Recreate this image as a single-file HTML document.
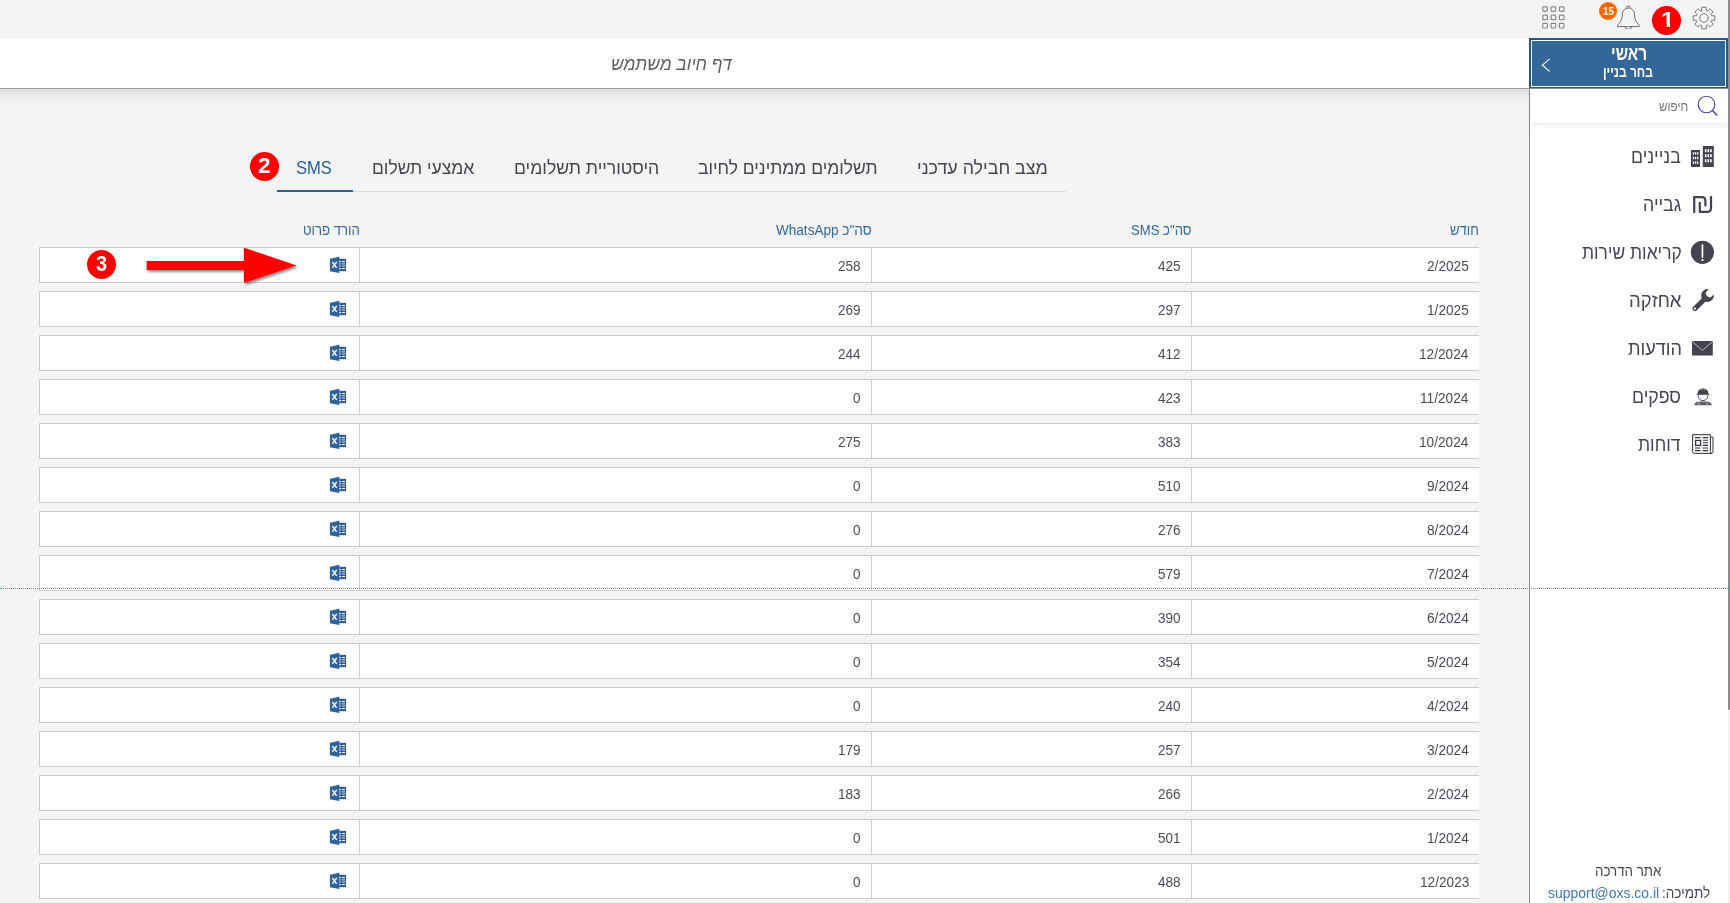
<!DOCTYPE html>
<html lang="he">
<head>
<meta charset="utf-8">
<title>דף חיוב משתמש</title>
<style>
*{box-sizing:border-box;margin:0;padding:0}
html,body{width:1730px;height:903px;overflow:hidden}
body{background:#f4f4f4;font-family:"Liberation Sans","DejaVu Sans",sans-serif;color:#45454f;position:relative}
.abs{position:absolute}
#hdr{left:0;top:38px;width:1529px;height:51px;background:#fff;border-bottom:1px solid #999}
#hsh{left:0;top:89px;width:1529px;height:17px;background:linear-gradient(#e0e0e0 0,#e7e7e7 25%,#eeeeee 55%,#f2f2f2 80%,#f4f4f4 100%)}
#title{left:572px;top:38px;width:200px;height:50px;line-height:50px;text-align:center;font-size:17px;font-style:italic;color:#55555e;direction:rtl}
#side{left:1529px;top:38px;width:199px;height:865px;background:#fff;border-left:1px solid #f60}
#main{left:1529px;top:38px;width:199px;height:51px;background:#336699;border:2px solid #1f5894;box-shadow:inset 0 0 0 1px #fff;color:#fff;text-align:center;direction:rtl}
#sbar{left:1728px;top:0;width:2px;height:903px;background:#f1f1f1}
#sthumb{left:1728px;top:0;width:2px;height:710px;background:#8c8a90;border-radius:0 0 2px 2px}
#dots{left:0;top:588px;width:1730px;height:0;border-top:1px dotted #2aa9a0}
.row{position:absolute;left:39px;width:1440px;height:36px;background:#fff;border-top:1px solid #cbcbcb;border-bottom:1px solid #cbcbcb;border-left:1px solid #cbcbcb}
.c{position:absolute;top:0;height:34px;line-height:36px;font-size:13px;text-align:right;padding-right:10px;color:#45454f}
.c1{left:1152px;width:288px}
.c2{left:832px;width:320px;border-right:1px solid #cbcbcb}
.c3{left:320px;width:512px;border-right:1px solid #cbcbcb}
.c4{left:0;width:320px;border-right:1px solid #cbcbcb}
.xl{position:absolute;left:289px;top:8px}
.th{position:absolute;top:220px;height:20px;line-height:20px;font-size:13px;color:#3b6a9c;text-align:right;direction:rtl;white-space:nowrap}
.tab{position:absolute;top:150px;height:34px;line-height:34px;font-size:17px;color:#45454f;text-align:center;direction:rtl;white-space:nowrap}
.mi{position:absolute;right:50px;font-size:18px;color:#45454f;direction:rtl;white-space:nowrap;height:24px;line-height:24px}

.ann{width:29.5px;height:29.5px;border-radius:50%;background:#fe0000;color:#fff;font-weight:bold;font-size:21px;line-height:29px;text-align:center}
#mt1{left:1529px;top:43px;width:199px;height:22px;line-height:22px;text-align:center;color:#fff;font-weight:bold;font-size:17px;direction:rtl}
#mt2{left:1529px;top:63px;width:199px;height:20px;line-height:20px;text-align:center;color:#fff;font-weight:bold;font-size:14px;direction:rtl}
#srch{left:1531px;top:89px;width:197px;height:34px;background:#fff;box-shadow:0 3px 6px rgba(0,0,0,.07)}
#srcht{left:1600px;top:96px;width:88px;height:20px;line-height:20px;text-align:right;font-size:13px;color:#777;direction:rtl}
.ft{left:1530px;width:198px;height:20px;line-height:20px;text-align:center;font-size:14px;color:#45454f;direction:rtl;white-space:nowrap}
.t{position:absolute;white-space:nowrap;line-height:normal;transform-origin:0 0}
</style>
</head>
<body>
<div class="abs" id="hdr"></div>
<div class="abs" id="hsh"></div>
<div class="abs" id="side"></div>
<div class="abs" id="main"></div>
<div class="abs" style="left:1529px;top:88px;width:199px;height:1px;background:#8e8c8c"></div>


<!-- top bar icons -->
<svg class="abs" style="left:1542px;top:6px" width="23" height="23" viewBox="0 0 23 23" fill="none" stroke="#8a8a8a" stroke-width="1.2">
<rect x="0.8" y="0.8" width="4.6" height="4.6" rx=".8"/><rect x="9.1" y="0.8" width="4.6" height="4.6" rx=".8"/><rect x="17.4" y="0.8" width="4.6" height="4.6" rx=".8"/>
<rect x="0.8" y="9.1" width="4.6" height="4.6" rx=".8"/><rect x="9.1" y="9.1" width="4.6" height="4.6" rx=".8"/><rect x="17.4" y="9.1" width="4.6" height="4.6" rx=".8"/>
<rect x="0.8" y="17.4" width="4.6" height="4.6" rx=".8"/><rect x="9.1" y="17.4" width="4.6" height="4.6" rx=".8"/><rect x="17.4" y="17.4" width="4.6" height="4.6" rx=".8"/>
</svg>
<svg class="abs" style="left:1616px;top:5px" width="25" height="25" viewBox="0 0 25 25" fill="none" stroke="#707070" stroke-width="1" stroke-linejoin="round">
<path d="M10.5 3.3 L11.1 1.3 H13.7 L14.3 3.3"/>
<path d="M1.6 20 C4.6 17.4 6.3 14.5 6.3 9.5 C6.3 5.6 9 3.2 12.4 3.2 C15.8 3.2 18.5 5.6 18.5 9.5 C18.5 14.5 20.2 17.4 23.2 20 V21.6 H1.6 Z"/>
<path d="M8.9 21.8 Q9.3 23.7 11.5 23.7 M13.3 23.7 Q15.5 23.7 15.9 21.8"/>
</svg>
<div class="abs" style="left:1599px;top:2px;width:18px;height:18px;border-radius:50%;background:#f60;color:#fff;font-size:10.5px;font-weight:bold;line-height:18px;text-align:center;letter-spacing:-.5px"></div>
<div class="abs ann" style="left:1651.9px;top:5.6px"></div>
<svg class="abs" style="left:1691.5px;top:5.5px" width="24" height="24" viewBox="0 0 24 24" fill="none" stroke="#787878" stroke-width="1" stroke-linejoin="round" stroke-linecap="round">
<path d="M9.65 4.77 L9.85 1.21 L14.15 1.21 L14.35 4.77 L15.45 5.23 L18.11 2.85 L21.15 5.89 L18.77 8.55 L19.23 9.65 L22.79 9.85 L22.79 14.15 L19.23 14.35 L18.77 15.45 L21.15 18.11 L18.11 21.15 L15.45 18.77 L14.35 19.23 L14.15 22.79 L9.85 22.79 L9.65 19.23 L8.55 18.77 L5.89 21.15 L2.85 18.11 L5.23 15.45 L4.77 14.35 L1.21 14.15 L1.21 9.85 L4.77 9.65 L5.23 8.55 L2.85 5.89 L5.89 2.85 L8.55 5.23 Z"/><circle cx="12" cy="12" r="4.3"/>
</svg>

<!-- sidebar -->
<svg class="abs" style="left:1540px;top:57px" width="12" height="16" viewBox="0 0 12 16" fill="none" stroke="#fff" stroke-width="1.1"><path d="M9.6 1.8 L2.4 8.2 L9.6 14.4"/></svg>
<div class="abs" id="srch"></div>
<svg class="abs" style="left:1696px;top:94px" width="24" height="24" viewBox="0 0 24 24" fill="none" stroke="#4a40a8" stroke-width="1.1"><circle cx="10.5" cy="10.5" r="8.3"/><path d="M16.4 16.4 L21.2 21.6" stroke-width="1.5"/></svg>


<!-- buildings -->
<svg class="abs" style="left:1691px;top:146px" width="23" height="21" viewBox="0 0 23 21">
<rect x="0" y="4" width="9" height="17" fill="#45434e"/><rect x="11.8" y="0" width="11" height="21" fill="#45434e"/>
<g fill="#fff">
<rect x="1.8" y="6.2" width="1.3" height="2.4"/><rect x="3.9" y="6.2" width="1.3" height="2.4"/><rect x="6" y="6.2" width="1.3" height="2.4"/>
<rect x="1.8" y="10.8" width="1.3" height="2.4"/><rect x="3.9" y="10.8" width="1.3" height="2.4"/><rect x="6" y="10.8" width="1.3" height="2.4"/>
<rect x="1.8" y="15.4" width="1.3" height="2.4"/><rect x="3.9" y="15.4" width="1.3" height="2.4"/><rect x="6" y="15.4" width="1.3" height="2.4"/>
<rect x="13.9" y="3.2" width="1.6" height="3"/><rect x="16.5" y="3.2" width="1.6" height="3"/><rect x="19.1" y="3.2" width="1.6" height="3"/>
<rect x="13.9" y="8.2" width="1.6" height="3"/><rect x="16.5" y="8.2" width="1.6" height="3"/><rect x="19.1" y="8.2" width="1.6" height="3"/>
<rect x="13.9" y="13.2" width="1.6" height="3"/><rect x="16.5" y="13.2" width="1.6" height="3"/><rect x="19.1" y="13.2" width="1.6" height="3"/>
</g></svg>
<!-- shekel -->
<svg class="abs" style="left:1692px;top:195px" width="22" height="19" viewBox="0 0 22 19" fill="none" stroke="#45434e" stroke-width="2.2">
<path d="M2.2 18 V2.2 H10 Q13.4 2.2 13.4 6 V11.2"/><path d="M7.8 7 V16.8 H15.4 Q19 16.8 19 13 V1.1"/>
</svg>
<!-- exclamation -->
<svg class="abs" style="left:1690px;top:240px" width="25" height="25" viewBox="0 0 25 25"><circle cx="12.4" cy="12.3" r="11.6" fill="#45434e"/><rect x="11.6" y="4.4" width="1.7" height="13.4" fill="#fff"/><rect x="11.5" y="19" width="1.9" height="1.9" fill="#fff"/></svg>
<!-- wrench -->
<svg class="abs" style="left:1691px;top:288px" width="24" height="24" viewBox="0 0 24 24">
<path d="M4 20.6 L14.6 10" stroke="#45434e" stroke-width="5" stroke-linecap="round" fill="none"/>
<path d="M17.6 1.2 A6.4 6.4 0 1 0 22.9 6.6 L19.4 9.6 L15.6 8.6 L14.6 4.8 Z" fill="#45434e"/>
<circle cx="3.9" cy="20.7" r="1.1" fill="#fff"/>
</svg>
<!-- envelope -->
<svg class="abs" style="left:1692px;top:341px" width="21" height="15" viewBox="0 0 21 15"><rect x="0" y="0" width="20.8" height="14.6" rx="1.2" fill="#45434e"/><path d="M0.6 0.8 L10.4 9.4 L20.2 0.8" fill="none" stroke="#d8d8dc" stroke-width=".8"/></svg>
<!-- worker -->
<svg class="abs" style="left:1693px;top:387px" width="20" height="19" viewBox="0 0 20 19">
<path d="M4.6 7 Q4.6 1.6 10 1.2 Q15.4 1.6 15.4 7 Z" fill="#45434e"/><rect x="8.2" y="0.8" width="1" height="2.4" fill="#fff" opacity=".6"/><rect x="10.8" y="0.8" width="1" height="2.4" fill="#fff" opacity=".6"/>
<rect x="3.8" y="6.6" width="12.4" height="1.2" fill="#45434e"/>
<path d="M5.2 8.2 Q5.4 13.4 10 13.6 Q14.6 13.4 14.8 8.2" fill="none" stroke="#45434e" stroke-width=".9"/>
<path d="M1 18.2 Q2 14.8 5 14.4 L15 14.4 Q18 14.8 19 18.2 Z" fill="#62616b"/>
<rect x="5.4" y="14.2" width="1" height="4" fill="#fff" opacity=".5"/><rect x="13.6" y="14.2" width="1" height="4" fill="#fff" opacity=".5"/>
</svg>
<!-- newspaper -->
<svg class="abs" style="left:1691.5px;top:434px" width="22" height="20" viewBox="0 0 22 20" fill="none" stroke="#33323a" stroke-width="1">
<path d="M18.4 3.2 H21 V17.4 Q21 19.4 19.2 19.4"/>
<path d="M0.6 0.7 H18.4 V17.6 Q18.4 19.4 19.8 19.4 H2.4 Q0.6 19.4 0.6 17.6 Z"/>
<rect x="3.6" y="6.4" width="5" height="5" stroke-width="1.3"/>
<path d="M3 3.6 H8.4 M10.8 3.6 H16 M10.8 6.2 H16 M10.8 8.8 H16 M10.8 11.4 H16 M3 14 H8.4 M10.8 14 H16 M3 16.6 H8.4 M10.8 16.6 H16" stroke-width="1.1"/>
</svg>


<!-- tabs -->
<div class="abs" style="left:278px;top:191px;width:788px;height:1px;background:#dcdcdc"></div>
<div class="abs" style="left:277px;top:190px;width:76px;height:2px;background:#2b5c94"></div>

<!-- table head -->

<div class="row" style="top:247px"><div class="c c4"><svg class="xl" viewBox="329 256 18 18" width="18" height="18"><path d="M329.9 258.8 L339.3 256.8 V273 L329.9 271.2 Z" fill="#2f6299"/><rect x="339.2" y="258.8" width="6.8" height="12.4" fill="#2b5e96"/><g fill="#fff"><rect x="339.3" y="261" width="1.8" height="1.1"/><rect x="342.1" y="261" width="2.8" height="1.1"/><rect x="339.3" y="263.2" width="1.8" height="1.1" opacity=".6"/><rect x="342.1" y="263.2" width="2.8" height="1.1" opacity=".6"/><rect x="339.3" y="265.7" width="1.8" height="1.1" opacity=".6"/><rect x="342.1" y="265.7" width="2.8" height="1.1" opacity=".6"/><rect x="339.3" y="264.3" width="1.8" height="1.4" opacity=".28"/><rect x="342.1" y="264.3" width="2.8" height="1.4" opacity=".28"/><rect x="339.3" y="268" width="1.8" height="1.1"/><rect x="342.1" y="268" width="2.8" height="1.1"/></g><path d="M332.3 262 L336.7 267.9 M336.7 262 L332.3 267.9" stroke="#fff" stroke-width="1.35" fill="none"/></svg></div><div class="c c3"></div><div class="c c2"></div></div>
<div class="row" style="top:291px"><div class="c c4"><svg class="xl" viewBox="329 256 18 18" width="18" height="18"><path d="M329.9 258.8 L339.3 256.8 V273 L329.9 271.2 Z" fill="#2f6299"/><rect x="339.2" y="258.8" width="6.8" height="12.4" fill="#2b5e96"/><g fill="#fff"><rect x="339.3" y="261" width="1.8" height="1.1"/><rect x="342.1" y="261" width="2.8" height="1.1"/><rect x="339.3" y="263.2" width="1.8" height="1.1" opacity=".6"/><rect x="342.1" y="263.2" width="2.8" height="1.1" opacity=".6"/><rect x="339.3" y="265.7" width="1.8" height="1.1" opacity=".6"/><rect x="342.1" y="265.7" width="2.8" height="1.1" opacity=".6"/><rect x="339.3" y="264.3" width="1.8" height="1.4" opacity=".28"/><rect x="342.1" y="264.3" width="2.8" height="1.4" opacity=".28"/><rect x="339.3" y="268" width="1.8" height="1.1"/><rect x="342.1" y="268" width="2.8" height="1.1"/></g><path d="M332.3 262 L336.7 267.9 M336.7 262 L332.3 267.9" stroke="#fff" stroke-width="1.35" fill="none"/></svg></div><div class="c c3"></div><div class="c c2"></div></div>
<div class="row" style="top:335px"><div class="c c4"><svg class="xl" viewBox="329 256 18 18" width="18" height="18"><path d="M329.9 258.8 L339.3 256.8 V273 L329.9 271.2 Z" fill="#2f6299"/><rect x="339.2" y="258.8" width="6.8" height="12.4" fill="#2b5e96"/><g fill="#fff"><rect x="339.3" y="261" width="1.8" height="1.1"/><rect x="342.1" y="261" width="2.8" height="1.1"/><rect x="339.3" y="263.2" width="1.8" height="1.1" opacity=".6"/><rect x="342.1" y="263.2" width="2.8" height="1.1" opacity=".6"/><rect x="339.3" y="265.7" width="1.8" height="1.1" opacity=".6"/><rect x="342.1" y="265.7" width="2.8" height="1.1" opacity=".6"/><rect x="339.3" y="264.3" width="1.8" height="1.4" opacity=".28"/><rect x="342.1" y="264.3" width="2.8" height="1.4" opacity=".28"/><rect x="339.3" y="268" width="1.8" height="1.1"/><rect x="342.1" y="268" width="2.8" height="1.1"/></g><path d="M332.3 262 L336.7 267.9 M336.7 262 L332.3 267.9" stroke="#fff" stroke-width="1.35" fill="none"/></svg></div><div class="c c3"></div><div class="c c2"></div></div>
<div class="row" style="top:379px"><div class="c c4"><svg class="xl" viewBox="329 256 18 18" width="18" height="18"><path d="M329.9 258.8 L339.3 256.8 V273 L329.9 271.2 Z" fill="#2f6299"/><rect x="339.2" y="258.8" width="6.8" height="12.4" fill="#2b5e96"/><g fill="#fff"><rect x="339.3" y="261" width="1.8" height="1.1"/><rect x="342.1" y="261" width="2.8" height="1.1"/><rect x="339.3" y="263.2" width="1.8" height="1.1" opacity=".6"/><rect x="342.1" y="263.2" width="2.8" height="1.1" opacity=".6"/><rect x="339.3" y="265.7" width="1.8" height="1.1" opacity=".6"/><rect x="342.1" y="265.7" width="2.8" height="1.1" opacity=".6"/><rect x="339.3" y="264.3" width="1.8" height="1.4" opacity=".28"/><rect x="342.1" y="264.3" width="2.8" height="1.4" opacity=".28"/><rect x="339.3" y="268" width="1.8" height="1.1"/><rect x="342.1" y="268" width="2.8" height="1.1"/></g><path d="M332.3 262 L336.7 267.9 M336.7 262 L332.3 267.9" stroke="#fff" stroke-width="1.35" fill="none"/></svg></div><div class="c c3"></div><div class="c c2"></div></div>
<div class="row" style="top:423px"><div class="c c4"><svg class="xl" viewBox="329 256 18 18" width="18" height="18"><path d="M329.9 258.8 L339.3 256.8 V273 L329.9 271.2 Z" fill="#2f6299"/><rect x="339.2" y="258.8" width="6.8" height="12.4" fill="#2b5e96"/><g fill="#fff"><rect x="339.3" y="261" width="1.8" height="1.1"/><rect x="342.1" y="261" width="2.8" height="1.1"/><rect x="339.3" y="263.2" width="1.8" height="1.1" opacity=".6"/><rect x="342.1" y="263.2" width="2.8" height="1.1" opacity=".6"/><rect x="339.3" y="265.7" width="1.8" height="1.1" opacity=".6"/><rect x="342.1" y="265.7" width="2.8" height="1.1" opacity=".6"/><rect x="339.3" y="264.3" width="1.8" height="1.4" opacity=".28"/><rect x="342.1" y="264.3" width="2.8" height="1.4" opacity=".28"/><rect x="339.3" y="268" width="1.8" height="1.1"/><rect x="342.1" y="268" width="2.8" height="1.1"/></g><path d="M332.3 262 L336.7 267.9 M336.7 262 L332.3 267.9" stroke="#fff" stroke-width="1.35" fill="none"/></svg></div><div class="c c3"></div><div class="c c2"></div></div>
<div class="row" style="top:467px"><div class="c c4"><svg class="xl" viewBox="329 256 18 18" width="18" height="18"><path d="M329.9 258.8 L339.3 256.8 V273 L329.9 271.2 Z" fill="#2f6299"/><rect x="339.2" y="258.8" width="6.8" height="12.4" fill="#2b5e96"/><g fill="#fff"><rect x="339.3" y="261" width="1.8" height="1.1"/><rect x="342.1" y="261" width="2.8" height="1.1"/><rect x="339.3" y="263.2" width="1.8" height="1.1" opacity=".6"/><rect x="342.1" y="263.2" width="2.8" height="1.1" opacity=".6"/><rect x="339.3" y="265.7" width="1.8" height="1.1" opacity=".6"/><rect x="342.1" y="265.7" width="2.8" height="1.1" opacity=".6"/><rect x="339.3" y="264.3" width="1.8" height="1.4" opacity=".28"/><rect x="342.1" y="264.3" width="2.8" height="1.4" opacity=".28"/><rect x="339.3" y="268" width="1.8" height="1.1"/><rect x="342.1" y="268" width="2.8" height="1.1"/></g><path d="M332.3 262 L336.7 267.9 M336.7 262 L332.3 267.9" stroke="#fff" stroke-width="1.35" fill="none"/></svg></div><div class="c c3"></div><div class="c c2"></div></div>
<div class="row" style="top:511px"><div class="c c4"><svg class="xl" viewBox="329 256 18 18" width="18" height="18"><path d="M329.9 258.8 L339.3 256.8 V273 L329.9 271.2 Z" fill="#2f6299"/><rect x="339.2" y="258.8" width="6.8" height="12.4" fill="#2b5e96"/><g fill="#fff"><rect x="339.3" y="261" width="1.8" height="1.1"/><rect x="342.1" y="261" width="2.8" height="1.1"/><rect x="339.3" y="263.2" width="1.8" height="1.1" opacity=".6"/><rect x="342.1" y="263.2" width="2.8" height="1.1" opacity=".6"/><rect x="339.3" y="265.7" width="1.8" height="1.1" opacity=".6"/><rect x="342.1" y="265.7" width="2.8" height="1.1" opacity=".6"/><rect x="339.3" y="264.3" width="1.8" height="1.4" opacity=".28"/><rect x="342.1" y="264.3" width="2.8" height="1.4" opacity=".28"/><rect x="339.3" y="268" width="1.8" height="1.1"/><rect x="342.1" y="268" width="2.8" height="1.1"/></g><path d="M332.3 262 L336.7 267.9 M336.7 262 L332.3 267.9" stroke="#fff" stroke-width="1.35" fill="none"/></svg></div><div class="c c3"></div><div class="c c2"></div></div>
<div class="row" style="top:555px"><div class="c c4"><svg class="xl" viewBox="329 256 18 18" width="18" height="18"><path d="M329.9 258.8 L339.3 256.8 V273 L329.9 271.2 Z" fill="#2f6299"/><rect x="339.2" y="258.8" width="6.8" height="12.4" fill="#2b5e96"/><g fill="#fff"><rect x="339.3" y="261" width="1.8" height="1.1"/><rect x="342.1" y="261" width="2.8" height="1.1"/><rect x="339.3" y="263.2" width="1.8" height="1.1" opacity=".6"/><rect x="342.1" y="263.2" width="2.8" height="1.1" opacity=".6"/><rect x="339.3" y="265.7" width="1.8" height="1.1" opacity=".6"/><rect x="342.1" y="265.7" width="2.8" height="1.1" opacity=".6"/><rect x="339.3" y="264.3" width="1.8" height="1.4" opacity=".28"/><rect x="342.1" y="264.3" width="2.8" height="1.4" opacity=".28"/><rect x="339.3" y="268" width="1.8" height="1.1"/><rect x="342.1" y="268" width="2.8" height="1.1"/></g><path d="M332.3 262 L336.7 267.9 M336.7 262 L332.3 267.9" stroke="#fff" stroke-width="1.35" fill="none"/></svg></div><div class="c c3"></div><div class="c c2"></div></div>
<div class="row" style="top:599px"><div class="c c4"><svg class="xl" viewBox="329 256 18 18" width="18" height="18"><path d="M329.9 258.8 L339.3 256.8 V273 L329.9 271.2 Z" fill="#2f6299"/><rect x="339.2" y="258.8" width="6.8" height="12.4" fill="#2b5e96"/><g fill="#fff"><rect x="339.3" y="261" width="1.8" height="1.1"/><rect x="342.1" y="261" width="2.8" height="1.1"/><rect x="339.3" y="263.2" width="1.8" height="1.1" opacity=".6"/><rect x="342.1" y="263.2" width="2.8" height="1.1" opacity=".6"/><rect x="339.3" y="265.7" width="1.8" height="1.1" opacity=".6"/><rect x="342.1" y="265.7" width="2.8" height="1.1" opacity=".6"/><rect x="339.3" y="264.3" width="1.8" height="1.4" opacity=".28"/><rect x="342.1" y="264.3" width="2.8" height="1.4" opacity=".28"/><rect x="339.3" y="268" width="1.8" height="1.1"/><rect x="342.1" y="268" width="2.8" height="1.1"/></g><path d="M332.3 262 L336.7 267.9 M336.7 262 L332.3 267.9" stroke="#fff" stroke-width="1.35" fill="none"/></svg></div><div class="c c3"></div><div class="c c2"></div></div>
<div class="row" style="top:643px"><div class="c c4"><svg class="xl" viewBox="329 256 18 18" width="18" height="18"><path d="M329.9 258.8 L339.3 256.8 V273 L329.9 271.2 Z" fill="#2f6299"/><rect x="339.2" y="258.8" width="6.8" height="12.4" fill="#2b5e96"/><g fill="#fff"><rect x="339.3" y="261" width="1.8" height="1.1"/><rect x="342.1" y="261" width="2.8" height="1.1"/><rect x="339.3" y="263.2" width="1.8" height="1.1" opacity=".6"/><rect x="342.1" y="263.2" width="2.8" height="1.1" opacity=".6"/><rect x="339.3" y="265.7" width="1.8" height="1.1" opacity=".6"/><rect x="342.1" y="265.7" width="2.8" height="1.1" opacity=".6"/><rect x="339.3" y="264.3" width="1.8" height="1.4" opacity=".28"/><rect x="342.1" y="264.3" width="2.8" height="1.4" opacity=".28"/><rect x="339.3" y="268" width="1.8" height="1.1"/><rect x="342.1" y="268" width="2.8" height="1.1"/></g><path d="M332.3 262 L336.7 267.9 M336.7 262 L332.3 267.9" stroke="#fff" stroke-width="1.35" fill="none"/></svg></div><div class="c c3"></div><div class="c c2"></div></div>
<div class="row" style="top:687px"><div class="c c4"><svg class="xl" viewBox="329 256 18 18" width="18" height="18"><path d="M329.9 258.8 L339.3 256.8 V273 L329.9 271.2 Z" fill="#2f6299"/><rect x="339.2" y="258.8" width="6.8" height="12.4" fill="#2b5e96"/><g fill="#fff"><rect x="339.3" y="261" width="1.8" height="1.1"/><rect x="342.1" y="261" width="2.8" height="1.1"/><rect x="339.3" y="263.2" width="1.8" height="1.1" opacity=".6"/><rect x="342.1" y="263.2" width="2.8" height="1.1" opacity=".6"/><rect x="339.3" y="265.7" width="1.8" height="1.1" opacity=".6"/><rect x="342.1" y="265.7" width="2.8" height="1.1" opacity=".6"/><rect x="339.3" y="264.3" width="1.8" height="1.4" opacity=".28"/><rect x="342.1" y="264.3" width="2.8" height="1.4" opacity=".28"/><rect x="339.3" y="268" width="1.8" height="1.1"/><rect x="342.1" y="268" width="2.8" height="1.1"/></g><path d="M332.3 262 L336.7 267.9 M336.7 262 L332.3 267.9" stroke="#fff" stroke-width="1.35" fill="none"/></svg></div><div class="c c3"></div><div class="c c2"></div></div>
<div class="row" style="top:731px"><div class="c c4"><svg class="xl" viewBox="329 256 18 18" width="18" height="18"><path d="M329.9 258.8 L339.3 256.8 V273 L329.9 271.2 Z" fill="#2f6299"/><rect x="339.2" y="258.8" width="6.8" height="12.4" fill="#2b5e96"/><g fill="#fff"><rect x="339.3" y="261" width="1.8" height="1.1"/><rect x="342.1" y="261" width="2.8" height="1.1"/><rect x="339.3" y="263.2" width="1.8" height="1.1" opacity=".6"/><rect x="342.1" y="263.2" width="2.8" height="1.1" opacity=".6"/><rect x="339.3" y="265.7" width="1.8" height="1.1" opacity=".6"/><rect x="342.1" y="265.7" width="2.8" height="1.1" opacity=".6"/><rect x="339.3" y="264.3" width="1.8" height="1.4" opacity=".28"/><rect x="342.1" y="264.3" width="2.8" height="1.4" opacity=".28"/><rect x="339.3" y="268" width="1.8" height="1.1"/><rect x="342.1" y="268" width="2.8" height="1.1"/></g><path d="M332.3 262 L336.7 267.9 M336.7 262 L332.3 267.9" stroke="#fff" stroke-width="1.35" fill="none"/></svg></div><div class="c c3"></div><div class="c c2"></div></div>
<div class="row" style="top:775px"><div class="c c4"><svg class="xl" viewBox="329 256 18 18" width="18" height="18"><path d="M329.9 258.8 L339.3 256.8 V273 L329.9 271.2 Z" fill="#2f6299"/><rect x="339.2" y="258.8" width="6.8" height="12.4" fill="#2b5e96"/><g fill="#fff"><rect x="339.3" y="261" width="1.8" height="1.1"/><rect x="342.1" y="261" width="2.8" height="1.1"/><rect x="339.3" y="263.2" width="1.8" height="1.1" opacity=".6"/><rect x="342.1" y="263.2" width="2.8" height="1.1" opacity=".6"/><rect x="339.3" y="265.7" width="1.8" height="1.1" opacity=".6"/><rect x="342.1" y="265.7" width="2.8" height="1.1" opacity=".6"/><rect x="339.3" y="264.3" width="1.8" height="1.4" opacity=".28"/><rect x="342.1" y="264.3" width="2.8" height="1.4" opacity=".28"/><rect x="339.3" y="268" width="1.8" height="1.1"/><rect x="342.1" y="268" width="2.8" height="1.1"/></g><path d="M332.3 262 L336.7 267.9 M336.7 262 L332.3 267.9" stroke="#fff" stroke-width="1.35" fill="none"/></svg></div><div class="c c3"></div><div class="c c2"></div></div>
<div class="row" style="top:819px"><div class="c c4"><svg class="xl" viewBox="329 256 18 18" width="18" height="18"><path d="M329.9 258.8 L339.3 256.8 V273 L329.9 271.2 Z" fill="#2f6299"/><rect x="339.2" y="258.8" width="6.8" height="12.4" fill="#2b5e96"/><g fill="#fff"><rect x="339.3" y="261" width="1.8" height="1.1"/><rect x="342.1" y="261" width="2.8" height="1.1"/><rect x="339.3" y="263.2" width="1.8" height="1.1" opacity=".6"/><rect x="342.1" y="263.2" width="2.8" height="1.1" opacity=".6"/><rect x="339.3" y="265.7" width="1.8" height="1.1" opacity=".6"/><rect x="342.1" y="265.7" width="2.8" height="1.1" opacity=".6"/><rect x="339.3" y="264.3" width="1.8" height="1.4" opacity=".28"/><rect x="342.1" y="264.3" width="2.8" height="1.4" opacity=".28"/><rect x="339.3" y="268" width="1.8" height="1.1"/><rect x="342.1" y="268" width="2.8" height="1.1"/></g><path d="M332.3 262 L336.7 267.9 M336.7 262 L332.3 267.9" stroke="#fff" stroke-width="1.35" fill="none"/></svg></div><div class="c c3"></div><div class="c c2"></div></div>
<div class="row" style="top:863px"><div class="c c4"><svg class="xl" viewBox="329 256 18 18" width="18" height="18"><path d="M329.9 258.8 L339.3 256.8 V273 L329.9 271.2 Z" fill="#2f6299"/><rect x="339.2" y="258.8" width="6.8" height="12.4" fill="#2b5e96"/><g fill="#fff"><rect x="339.3" y="261" width="1.8" height="1.1"/><rect x="342.1" y="261" width="2.8" height="1.1"/><rect x="339.3" y="263.2" width="1.8" height="1.1" opacity=".6"/><rect x="342.1" y="263.2" width="2.8" height="1.1" opacity=".6"/><rect x="339.3" y="265.7" width="1.8" height="1.1" opacity=".6"/><rect x="342.1" y="265.7" width="2.8" height="1.1" opacity=".6"/><rect x="339.3" y="264.3" width="1.8" height="1.4" opacity=".28"/><rect x="342.1" y="264.3" width="2.8" height="1.4" opacity=".28"/><rect x="339.3" y="268" width="1.8" height="1.1"/><rect x="342.1" y="268" width="2.8" height="1.1"/></g><path d="M332.3 262 L336.7 267.9 M336.7 262 L332.3 267.9" stroke="#fff" stroke-width="1.35" fill="none"/></svg></div><div class="c c3"></div><div class="c c2"></div></div>

<!-- annotations -->
<div class="abs ann" style="left:249.8px;top:151.6px"></div>
<div class="abs ann" style="left:86.7px;top:249.6px"></div>
<svg class="abs" style="left:140px;top:240px" width="170" height="50" viewBox="0 0 170 50"><defs><filter id="sh" x="-10%" y="-20%" width="120%" height="150%"><feDropShadow dx="1.5" dy="2" stdDeviation="1.2" flood-color="#000" flood-opacity=".45"/></filter></defs>
<path d="M6.6 21 H103.9 V7.7 L156.5 25.4 L103.9 43.1 V29.9 H6.6 Z" fill="#fe0000" filter="url(#sh)"/></svg>


<div class="t" dir="rtl" style="left:610.77px;top:52.8px;font-size:18.5px;transform:scaleX(0.9333);font-style:italic;color:#5b5b64">דף חיוב משתמש</div>
<div class="t" dir="ltr" style="left:296.31px;top:156.8px;font-size:18.7px;transform:scaleX(0.8872);color:#27609f">SMS</div>
<div class="t" dir="rtl" style="left:371.78px;top:156.8px;font-size:19px;transform:scaleX(0.9209);color:#45454f">אמצעי תשלום</div>
<div class="t" dir="rtl" style="left:514.07px;top:156.8px;font-size:19px;transform:scaleX(0.9279);color:#45454f">היסטוריית תשלומים</div>
<div class="t" dir="rtl" style="left:698.4px;top:156.8px;font-size:19px;transform:scaleX(0.9201);color:#45454f">תשלומים ממתינים לחיוב</div>
<div class="t" dir="rtl" style="left:917.06px;top:156.8px;font-size:19px;transform:scaleX(0.9394);color:#45454f">מצב חבילה עדכני</div>
<div class="t" dir="rtl" style="left:1450.2px;top:222px;font-size:14.3px;transform:scaleX(0.9129);color:#33679f">חודש</div>
<div class="t" dir="rtl" style="left:1131.08px;top:222px;font-size:14.3px;transform:scaleX(0.9187);color:#33679f">סה"כ SMS</div>
<div class="t" dir="rtl" style="left:775.5px;top:222px;font-size:14.3px;transform:scaleX(0.948);color:#33679f">סה"כ WhatsApp</div>
<div class="t" dir="rtl" style="left:302.68px;top:222px;font-size:14.3px;transform:scaleX(0.92);color:#33679f">הורד פרוט</div>
<div class="t" dir="rtl" style="left:1610.99px;top:43.4px;font-size:19px;transform:scaleX(0.8071);font-weight:bold;color:#fff">ראשי</div>
<div class="t" dir="rtl" style="left:1602.99px;top:63.9px;font-size:14.8px;transform:scaleX(0.8082);font-weight:bold;color:#fff">בחר בניין</div>
<div class="t" dir="rtl" style="left:1659.0px;top:98.8px;font-size:13.5px;transform:scaleX(0.8636);color:#777">חיפוש</div>
<div class="t" dir="rtl" style="left:1630.98px;top:145.9px;font-size:19.3px;transform:scaleX(0.917);color:#45454f">בניינים</div>
<div class="t" dir="rtl" style="left:1642.78px;top:193.9px;font-size:19.3px;transform:scaleX(0.92);color:#45454f">גבייה</div>
<div class="t" dir="rtl" style="left:1581.8px;top:241.9px;font-size:19.3px;transform:scaleX(0.9055);color:#45454f">קריאות שירות</div>
<div class="t" dir="rtl" style="left:1628.64px;top:289.9px;font-size:19.3px;transform:scaleX(0.9604);color:#45454f">אחזקה</div>
<div class="t" dir="rtl" style="left:1627.9px;top:337.9px;font-size:19.3px;transform:scaleX(0.9393);color:#45454f">הודעות</div>
<div class="t" dir="rtl" style="left:1631.78px;top:385.9px;font-size:19.3px;transform:scaleX(0.9192);color:#45454f">ספקים</div>
<div class="t" dir="rtl" style="left:1637.8px;top:433.9px;font-size:19.3px;transform:scaleX(0.9085);color:#45454f">דוחות</div>
<div class="t" dir="rtl" style="left:1594.61px;top:861.9px;font-size:15px;transform:scaleX(0.8892);color:#45454f">אתר הדרכה</div>
<div class="t" dir="rtl" style="left:1661.6px;top:883.9px;font-size:15px;transform:scaleX(0.9019);color:#45454f">לתמיכה:</div>
<div class="t" dir="ltr" style="left:1547.9px;top:884.9px;font-size:14px;transform:scaleX(0.9964);color:#4076ad">support@oxs.co.il</div>
<div class="t" dir="ltr" style="left:1602.6px;top:5.3px;font-size:11.5px;transform:scaleX(0.8615);font-weight:bold;color:#fff">15</div>
<div class="t" dir="ltr" style="left:1660.71px;top:9.0px;font-size:22px;transform:scaleX(1.0857);font-weight:bold;color:#fff;line-height:1;clip-path:polygon(0 0,67% 0,67% 100%,42% 100%,42% 68%,0 68%)">1</div>
<div class="t" dir="ltr" style="left:258.2px;top:152.8px;font-size:22px;transform:scaleX(1.0);font-weight:bold;color:#fff">2</div>
<div class="t" dir="ltr" style="left:95.9px;top:250.8px;font-size:22px;transform:scaleX(0.9083);font-weight:bold;color:#fff">3</div>
<div class="t" dir="ltr" style="left:1427.18px;top:258.1px;font-size:14px;transform:scaleX(0.975);color:#4b4b55">2/2025</div>
<div class="t" dir="ltr" style="left:1158.3px;top:258.1px;font-size:14px;transform:scaleX(0.965);color:#4b4b55">425</div>
<div class="t" dir="ltr" style="left:838.4px;top:258.1px;font-size:14px;transform:scaleX(0.965);color:#4b4b55">258</div>
<div class="t" dir="ltr" style="left:1427.18px;top:302.1px;font-size:14px;transform:scaleX(0.975);color:#4b4b55">1/2025</div>
<div class="t" dir="ltr" style="left:1158.3px;top:302.1px;font-size:14px;transform:scaleX(0.965);color:#4b4b55">297</div>
<div class="t" dir="ltr" style="left:838.4px;top:302.1px;font-size:14px;transform:scaleX(0.965);color:#4b4b55">269</div>
<div class="t" dir="ltr" style="left:1419.38px;top:346.1px;font-size:14px;transform:scaleX(0.975);color:#4b4b55">12/2024</div>
<div class="t" dir="ltr" style="left:1158.3px;top:346.1px;font-size:14px;transform:scaleX(0.965);color:#4b4b55">412</div>
<div class="t" dir="ltr" style="left:838.4px;top:346.1px;font-size:14px;transform:scaleX(0.965);color:#4b4b55">244</div>
<div class="t" dir="ltr" style="left:1420.35px;top:390.1px;font-size:14px;transform:scaleX(0.975);color:#4b4b55">11/2024</div>
<div class="t" dir="ltr" style="left:1158.3px;top:390.1px;font-size:14px;transform:scaleX(0.965);color:#4b4b55">423</div>
<div class="t" dir="ltr" style="left:852.88px;top:390.1px;font-size:14px;transform:scaleX(0.965);color:#4b4b55">0</div>
<div class="t" dir="ltr" style="left:1419.38px;top:434.1px;font-size:14px;transform:scaleX(0.975);color:#4b4b55">10/2024</div>
<div class="t" dir="ltr" style="left:1158.3px;top:434.1px;font-size:14px;transform:scaleX(0.965);color:#4b4b55">383</div>
<div class="t" dir="ltr" style="left:838.4px;top:434.1px;font-size:14px;transform:scaleX(0.965);color:#4b4b55">275</div>
<div class="t" dir="ltr" style="left:1427.18px;top:478.1px;font-size:14px;transform:scaleX(0.975);color:#4b4b55">9/2024</div>
<div class="t" dir="ltr" style="left:1158.3px;top:478.1px;font-size:14px;transform:scaleX(0.965);color:#4b4b55">510</div>
<div class="t" dir="ltr" style="left:852.88px;top:478.1px;font-size:14px;transform:scaleX(0.965);color:#4b4b55">0</div>
<div class="t" dir="ltr" style="left:1427.18px;top:522.1px;font-size:14px;transform:scaleX(0.975);color:#4b4b55">8/2024</div>
<div class="t" dir="ltr" style="left:1158.3px;top:522.1px;font-size:14px;transform:scaleX(0.965);color:#4b4b55">276</div>
<div class="t" dir="ltr" style="left:852.88px;top:522.1px;font-size:14px;transform:scaleX(0.965);color:#4b4b55">0</div>
<div class="t" dir="ltr" style="left:1427.18px;top:566.1px;font-size:14px;transform:scaleX(0.975);color:#4b4b55">7/2024</div>
<div class="t" dir="ltr" style="left:1158.3px;top:566.1px;font-size:14px;transform:scaleX(0.965);color:#4b4b55">579</div>
<div class="t" dir="ltr" style="left:852.88px;top:566.1px;font-size:14px;transform:scaleX(0.965);color:#4b4b55">0</div>
<div class="t" dir="ltr" style="left:1427.18px;top:610.1px;font-size:14px;transform:scaleX(0.975);color:#4b4b55">6/2024</div>
<div class="t" dir="ltr" style="left:1158.3px;top:610.1px;font-size:14px;transform:scaleX(0.965);color:#4b4b55">390</div>
<div class="t" dir="ltr" style="left:852.88px;top:610.1px;font-size:14px;transform:scaleX(0.965);color:#4b4b55">0</div>
<div class="t" dir="ltr" style="left:1427.18px;top:654.1px;font-size:14px;transform:scaleX(0.975);color:#4b4b55">5/2024</div>
<div class="t" dir="ltr" style="left:1158.3px;top:654.1px;font-size:14px;transform:scaleX(0.965);color:#4b4b55">354</div>
<div class="t" dir="ltr" style="left:852.88px;top:654.1px;font-size:14px;transform:scaleX(0.965);color:#4b4b55">0</div>
<div class="t" dir="ltr" style="left:1427.18px;top:698.1px;font-size:14px;transform:scaleX(0.975);color:#4b4b55">4/2024</div>
<div class="t" dir="ltr" style="left:1158.3px;top:698.1px;font-size:14px;transform:scaleX(0.965);color:#4b4b55">240</div>
<div class="t" dir="ltr" style="left:852.88px;top:698.1px;font-size:14px;transform:scaleX(0.965);color:#4b4b55">0</div>
<div class="t" dir="ltr" style="left:1427.18px;top:742.1px;font-size:14px;transform:scaleX(0.975);color:#4b4b55">3/2024</div>
<div class="t" dir="ltr" style="left:1158.3px;top:742.1px;font-size:14px;transform:scaleX(0.965);color:#4b4b55">257</div>
<div class="t" dir="ltr" style="left:838.4px;top:742.1px;font-size:14px;transform:scaleX(0.965);color:#4b4b55">179</div>
<div class="t" dir="ltr" style="left:1427.18px;top:786.1px;font-size:14px;transform:scaleX(0.975);color:#4b4b55">2/2024</div>
<div class="t" dir="ltr" style="left:1158.3px;top:786.1px;font-size:14px;transform:scaleX(0.965);color:#4b4b55">266</div>
<div class="t" dir="ltr" style="left:838.4px;top:786.1px;font-size:14px;transform:scaleX(0.965);color:#4b4b55">183</div>
<div class="t" dir="ltr" style="left:1427.18px;top:830.1px;font-size:14px;transform:scaleX(0.975);color:#4b4b55">1/2024</div>
<div class="t" dir="ltr" style="left:1158.3px;top:830.1px;font-size:14px;transform:scaleX(0.965);color:#4b4b55">501</div>
<div class="t" dir="ltr" style="left:852.88px;top:830.1px;font-size:14px;transform:scaleX(0.965);color:#4b4b55">0</div>
<div class="t" dir="ltr" style="left:1420.35px;top:874.1px;font-size:14px;transform:scaleX(0.975);color:#4b4b55">12/2023</div>
<div class="t" dir="ltr" style="left:1158.3px;top:874.1px;font-size:14px;transform:scaleX(0.965);color:#4b4b55">488</div>
<div class="t" dir="ltr" style="left:852.88px;top:874.1px;font-size:14px;transform:scaleX(0.965);color:#4b4b55">0</div>
<div class="abs" id="sbar"></div>
<div class="abs" id="sthumb"></div>
<div class="abs" id="dots"></div>
</body>
</html>
